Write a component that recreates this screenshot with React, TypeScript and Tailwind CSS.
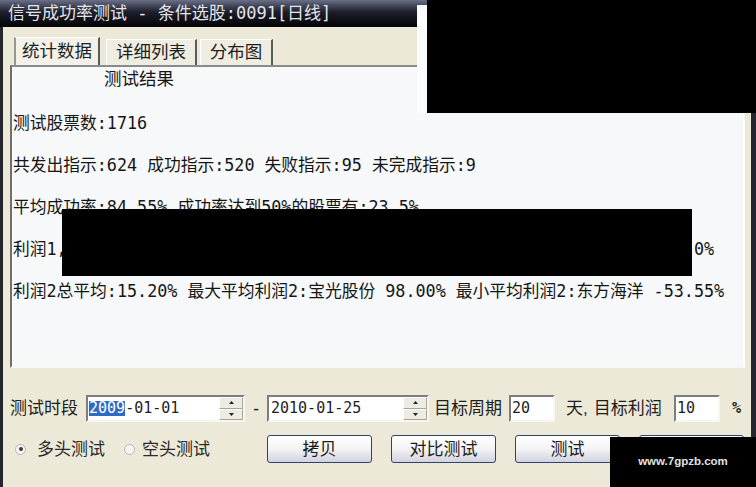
import React from 'react';

const mono = "font-['DejaVu_Sans_Mono','Noto_Sans_CJK_SC',monospace]";

const lines = [
  '测试股票数:1716',
  '共发出指示:624 成功指示:520 失败指示:95 未完成指示:9',
  '平均成功率:84.55% 成功率达到50%的股票有:23.5%',
  '利润1,总平均:12.35% 最大平均利润1:宝光股份 95.2% 最小平均利润1:东方海洋 -50.0%',
  '利润2总平均:15.20% 最大平均利润2:宝光股份 98.00% 最小平均利润2:东方海洋 -53.55%',
];

const Spin = () => (
  <div className="flex h-full w-[24px] flex-col">
    <div className="flex flex-1 items-center justify-center border border-t-white border-l-white border-r-[#a9a594] border-b-[#a9a594] bg-[#ecebe4]">
      <svg width="5" height="3" viewBox="0 0 5 3">
        <path d="M2.5 0L5 3H0z" fill="#222" />
      </svg>
    </div>
    <div className="flex flex-1 items-center justify-center border border-t-white border-l-white border-r-[#a9a594] border-b-[#a9a594] bg-[#ecebe4]">
      <svg width="5" height="3" viewBox="0 0 5 3">
        <path d="M0 0H5L2.5 3z" fill="#222" />
      </svg>
    </div>
  </div>
);

const Sunken = ({
  className,
  children,
}: {
  className: string;
  children: React.ReactNode;
}) => (
  <div
    className={
      'flex h-[27px] items-stretch border-2 border-t-[#7d7d7d] border-l-[#7d7d7d] border-r-[#f7f6f0] border-b-[#f7f6f0] bg-white ' +
      className
    }
  >
    {children}
  </div>
);

const Button = ({ label }: { label?: string }) => (
  <button className="flex h-[28px] w-[105px] items-center justify-center rounded-[3px] border border-[#2f4468] bg-linear-to-b from-white via-[#f3f3f3] to-[#d3d2e2] text-[17px] leading-none text-[#1c1c1c]">
    {label}
  </button>
);

const Radio = ({ checked }: { checked?: boolean }) => (
  <span className="flex h-[11px] w-[11px] items-center justify-center rounded-full border border-[#b4b4b4] bg-[#f6f6f4]">
    {checked && <span className="h-[4px] w-[4px] rounded-full bg-[#3a3a3a]" />}
  </span>
);

export default function App() {
  return (
    <div
      className={
        'relative flex h-[487px] w-[756px] flex-col overflow-hidden bg-[#ece9d8] ' +
        mono
      }
    >
      {/* title bar */}
      <div className="flex h-[27px] items-center bg-linear-to-b from-[#6a7088] via-[#1c1e2a] via-45% to-[#050507] pl-[8px] text-[17px] leading-none text-[#e4e4ea]">
        信号成功率测试 - 条件选股:0091[日线]
      </div>

      <div className="flex flex-1 flex-col border-l-[3px] border-r-[5px] border-[#26262e]">
        {/* tabs */}
        <div className="mt-[10px] flex h-[28px] items-end pl-[11px] text-[17.5px] leading-none text-[#1e1e1e]">
          <div className="flex h-[28px] w-[86px] items-center justify-center border-t border-l-2 border-r-2 border-t-white border-l-[#9a988c] border-r-[#5a5a5a] bg-[#f3f1e8]">
            统计数据
          </div>
          <div className="ml-[6px] flex h-[26px] w-[91px] items-center justify-center border-t border-l border-r-2 border-t-white border-l-white border-r-[#5a5a5a] bg-[#efede2]">
            详细列表
          </div>
          <div className="ml-[3px] flex h-[26px] w-[73px] items-center justify-center border-t border-l border-r-2 border-t-white border-l-white border-r-[#5a5a5a] bg-[#efede2]">
            分布图
          </div>
        </div>

        {/* content */}
        <div className="ml-[7px] mr-[6px] h-[303px] border-2 border-t-[#8a8a8a] border-l-[#6f6f6f] border-r-white border-b-[#f7f6f0] bg-[#f6f8fa] text-[16.75px] leading-none text-[#151515]">
          <div className="mt-[1px] flex h-[24px] items-center pl-[92px] text-[17.5px]">测试结果</div>
          <div className="mt-[10px] flex flex-col pl-[1px]">
            {lines.map((line) => (
              <div key={line} className="flex h-[42px] items-center whitespace-nowrap">
                {line}
              </div>
            ))}
          </div>
        </div>

        {/* period row */}
        <div className="mt-[27px] flex h-[27px] items-center pl-[7px] text-[17px] leading-none text-[#1e1e1e]">
          <span className="w-[76px]">测试时段</span>
          <Sunken className="w-[159px]">
            <div className="flex flex-1 items-center pl-[1px] text-[15px]">
              <span className="bg-[#316ac5] text-white">2009</span>
              <span>-01-01</span>
            </div>
            <Spin />
          </Sunken>
          <span className="w-[22px] text-center">-</span>
          <Sunken className="w-[162px]">
            <div className="flex flex-1 items-center pl-[2px] text-[15px]">2010-01-25</div>
            <Spin />
          </Sunken>
          <span className="ml-[5px] w-[75px]">目标周期</span>
          <Sunken className="w-[46px]">
            <div className="flex flex-1 items-center pl-[1px] text-[15px]">20</div>
          </Sunken>
          <span className="ml-[11px] flex w-[108px] items-center whitespace-nowrap">
            天<span className="font-['Liberation_Sans',sans-serif]">,</span>
            <span className="ml-[6px]">目标利润</span>
          </span>
          <Sunken className="w-[46px]">
            <div className="flex flex-1 items-center pl-[1px] text-[15px]">10</div>
          </Sunken>
          <span className="ml-[12px] text-[15px] font-bold">%</span>
        </div>

        {/* mode + buttons row */}
        <div className="mt-[13px] flex h-[28px] items-center pl-[7px] text-[17px] leading-none text-[#2a2a2a]">
          <div className="flex w-[257px] items-center">
            <span className="ml-[5px]">
              <Radio checked />
            </span>
            <span className="ml-[11px]">多头测试</span>
            <span className="ml-[19px]">
              <Radio />
            </span>
            <span className="ml-[7px]">空头测试</span>
          </div>
          <div className="flex gap-[19px]">
            <Button label="拷贝" />
            <Button label="对比测试" />
            <Button label="测试" />
            <Button />
          </div>
        </div>
      </div>

      {/* masks over the screenshot */}
      <div className="absolute left-[417px] top-[5px] h-[108px] w-[10px] bg-[#fbfcfd]" />
      <div className="absolute left-[427px] top-0 h-[113px] w-[329px] bg-black" />
      <div className="absolute left-[62px] top-[209px] h-[67px] w-[630px] bg-black" />
      <div className="absolute left-[610px] top-[437px] flex h-[50px] w-[146px] items-center justify-center bg-black font-['Liberation_Sans',Arial,sans-serif] text-[11.5px] font-bold text-[#e2e2e2]">
        www.7gpzb.com
      </div>
    </div>
  );
}
